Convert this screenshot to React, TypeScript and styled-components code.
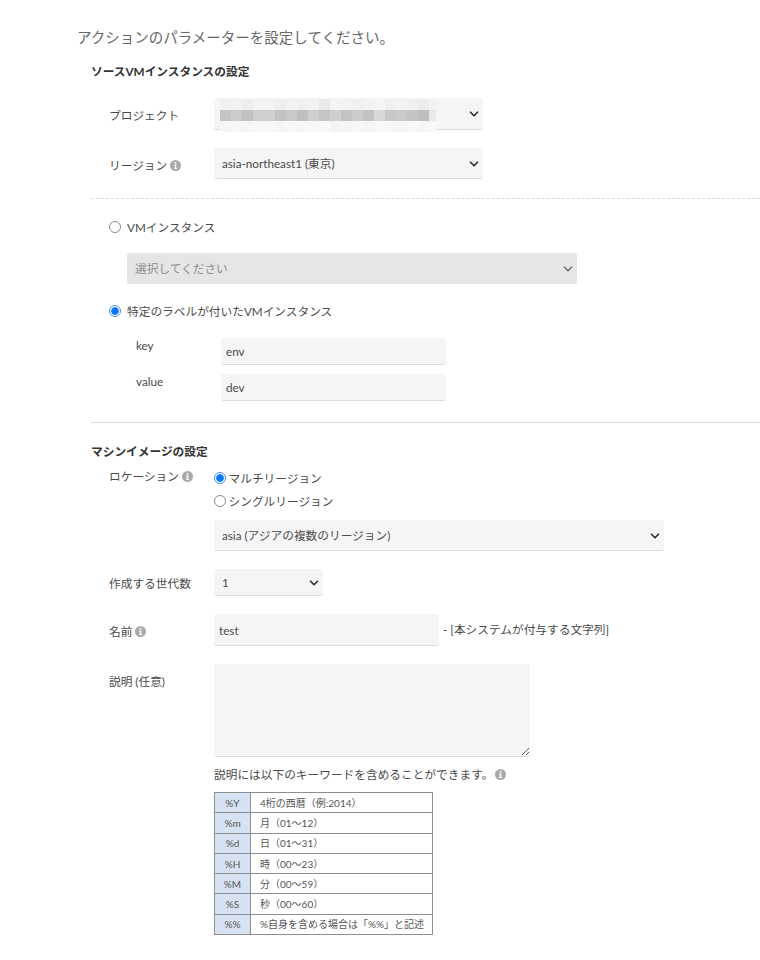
import { ReactNode } from 'react'
import styled, { createGlobalStyle } from 'styled-components'
import { ChevronDown } from 'lucide-react'

const GlobalStyle = createGlobalStyle`
  html, body {
    margin: 0;
    padding: 0;
    background: #fff;
  }
  body {
    font-family: Lato, "Noto Sans CJK JP", sans-serif;
    color: #4a4a4a;
    font-size: 12px;
  }
`

const Page = styled.div`
  width: 760px;
  height: 960px;
  overflow: hidden;
  box-sizing: border-box;
  padding: 29px 0 0 77px;
`

const Title = styled.div`
  font-size: 14.5px;
  line-height: 18px;
  color: #666;
`

const Body = styled.div`
  padding-left: 14px;
`

const Heading = styled.div<{ $top: number }>`
  margin-top: ${(p) => p.$top}px;
  font-size: 11.7px;
  line-height: 16px;
  font-weight: 700;
  color: #333;
`

const Row = styled.div<{ $top: number }>`
  display: flex;
  align-items: flex-start;
  margin-top: ${(p) => p.$top}px;
  padding-left: 18px;
`

const Label = styled.div<{ $pad: number }>`
  width: 105px;
  flex: none;
  display: flex;
  align-items: center;
  gap: 3px;
  padding-top: ${(p) => p.$pad}px;
  font-size: 11.7px;
  line-height: 16px;
  color: #4a4a4a;
`

const Info = styled.span`
  display: inline-flex;
  svg {
    display: block;
  }
`

const InfoIcon = () => (
  <Info>
    <svg width="11" height="11" viewBox="0 0 11 11">
      <circle cx="5.5" cy="5.5" r="5.5" fill="#a9a9a9" />
      <rect x="4.7" y="2" width="1.6" height="1.6" fill="#fff" />
      <path d="M4 4.6h2.3v3.3h.8v1H4v-1h.8V5.6H4z" fill="#fff" />
    </svg>
  </Info>
)

const SelectWrap = styled.div<{ $w: number; $h: number }>`
  position: relative;
  width: ${(p) => p.$w}px;
  height: ${(p) => p.$h}px;
  flex: none;
`

const SelectBox = styled.select<{ $off?: boolean }>`
  appearance: none;
  display: block;
  width: 100%;
  height: 100%;
  box-sizing: border-box;
  margin: 0;
  padding: 0 24px 0 8px;
  border: 0;
  border-bottom: 1px solid ${(p) => (p.$off ? '#e5e5e5' : '#dcdcdc')};
  border-radius: 3px;
  background: ${(p) => (p.$off ? '#e5e5e5' : '#f5f5f5')};
  color: ${(p) => (p.$off ? '#8f8f8f' : '#4a4a4a')};
  font: 11.7px Lato, "Noto Sans CJK JP", sans-serif;
  opacity: 1;
`

const Chevron = styled.span<{ $off?: boolean }>`
  position: absolute;
  top: 50%;
  right: 2px;
  transform: translateY(-50%);
  display: flex;
  color: ${(p) => (p.$off ? '#777' : '#333')};
  pointer-events: none;
`

const Select = ({ w, h, value, off }: { w: number; h: number; value: string; off?: boolean }) => (
  <SelectWrap $w={w} $h={h}>
    <SelectBox $off={off} disabled={off} defaultValue={value}>
      <option value={value}>{value}</option>
    </SelectBox>
    <Chevron $off={off}>
      <ChevronDown size={14} strokeWidth={3} />
    </Chevron>
  </SelectWrap>
)

const Mosaic = styled.svg`
  position: absolute;
  left: 6px;
  top: 1px;
  display: block;
`

const mosaicTop = [
  '#f0f0f0', '#f2f2f2', '#eeeeee', '#f3f3f3', '#f3f3f3', '#efefef', '#f2f2f2', '#f0f0f0', '#f2f2f2', '#e9e9e9',
  '#f4f4f4', '#f3f3f3', '#f0f0f0', '#f3f3f3', '#f5f5f5', '#f0f0f0', '#f2f2f2', '#f0f0f0', '#ededed', '#f2f2f2',
]
const mosaicMiddle = [
  '#c4c4c4', '#cccccc', '#c2c2c2', '#cfcfcf', '#cfcfcf', '#c3c3c3', '#c9c9c9', '#bfbfbf', '#cfcfcf', '#c5c5c5',
  '#cfcfcf', '#c3c3c3', '#cccccc', '#c2c2c2', '#d8d8d8', '#c8c8c8', '#cacaca', '#c4c4c4', '#bfbfbf', '#e9e9e9',
]
const mosaicBottom = [
  '#f5f5f5', '#f7f7f7', '#f6f6f6', '#f8f8f8', '#f8f8f8', '#f6f6f6', '#f8f8f8', '#f6f6f6', '#f8f8f8', '#f9f9f9',
  '#f4f4f4', '#f5f5f5', '#f7f7f7', '#f5f5f5', '#f8f8f8', '#f7f7f7', '#f6f6f6', '#f8f8f8', '#f6f6f6', '#f8f8f8',
]

// the project name is pixelated out in the source picture
const BlurredValue = () => (
  <Mosaic width="216" height="33" viewBox="0 0 216 33">
    {[mosaicTop, mosaicMiddle, mosaicBottom].map((cells, r) =>
      cells.map((c, i) => <rect key={`${r}-${i}`} x={i * 11} y={r * 11} width={i === 19 ? 7 : 11} height="11" fill={c} />),
    )}
  </Mosaic>
)

const Input = styled.input<{ $w: number; $h: number }>`
  display: block;
  flex: none;
  width: ${(p) => p.$w}px;
  height: ${(p) => p.$h}px;
  box-sizing: border-box;
  margin: 0;
  padding: 0 5px;
  border: 0;
  border-bottom: 1px solid #dcdcdc;
  border-radius: 3px;
  background: #f5f5f5;
  color: #4a4a4a;
  font: 11.7px Lato, "Noto Sans CJK JP", sans-serif;
  outline: none;
`

const TextArea = styled.textarea`
  display: block;
  width: 316px;
  height: 93px;
  box-sizing: border-box;
  margin: 0;
  border: 0;
  border-bottom: 1px solid #dcdcdc;
  border-radius: 3px;
  background: #f5f5f5;
  resize: vertical;
  outline: none;
`

const Dashed = styled.hr`
  margin: 19px 0 0;
  border: 0;
  border-top: 1px dashed #d8d8d8;
`

const Solid = styled.hr`
  margin: 21px 0 0;
  border: 0;
  border-top: 1px solid #d8d8d8;
`

const RadioRow = styled.label<{ $top: number; $left: number; $gap: number }>`
  display: flex;
  align-items: center;
  gap: ${(p) => p.$gap}px;
  margin-top: ${(p) => p.$top}px;
  padding-left: ${(p) => p.$left}px;
  font-size: 11.7px;
  line-height: 16px;
  color: #4a4a4a;
`

const RadioDot = styled.span<{ $on?: boolean }>`
  flex: none;
  width: 12px;
  height: 12px;
  border-radius: 50%;
  box-sizing: border-box;
  border: 1px solid ${(p) => (p.$on ? '#3d8ff5' : '#8a8a8a')};
  background: ${(p) => (p.$on ? 'radial-gradient(circle, #0a75f5 3.4px, #fff 4.2px)' : '#fff')};
`

type RadioProps = { on?: boolean; top: number; left: number; gap: number; children: ReactNode }

const Radio = ({ on, top, left, gap, children }: RadioProps) => (
  <RadioRow $top={top} $left={left} $gap={gap}>
    <RadioDot $on={on} />
    {children}
  </RadioRow>
)

const Indent = styled.div`
  margin-top: 18px;
  padding-left: 36px;
`

const PairRow = styled.div<{ $top: number }>`
  display: flex;
  align-items: flex-start;
  margin-top: ${(p) => p.$top}px;
  padding-left: 45px;
`

const PairLabel = styled.div`
  width: 85px;
  flex: none;
  margin-top: -1px;
  font-size: 11.7px;
  line-height: 16px;
  color: #4a4a4a;
`

const Column = styled.div`
  display: flex;
  flex-direction: column;
`

const SelectGap = styled.div`
  margin-top: 11px;
`

const Suffix = styled.div`
  padding: 7px 0 0 4px;
  font-size: 11.7px;
  line-height: 16px;
  color: #4a4a4a;
`

const Note = styled.div`
  display: flex;
  align-items: center;
  gap: 2px;
  margin-top: 9px;
  font-size: 11.7px;
  line-height: 16px;
  color: #4a4a4a;
`

const Keywords = styled.table`
  width: 219px;
  margin-top: 10px;
  border-collapse: collapse;
  table-layout: fixed;
  font-size: 10px;
  color: #555;

  td {
    height: 20.3px;
    box-sizing: border-box;
    padding: 0;
    border: 1px solid #8e8e8e;
    line-height: 12px;
  }
`

const KeyCell = styled.td`
  width: 36px;
  background: #d6e2f1;
  text-align: center;
`

const ValueCell = styled.td`
  padding-left: 9px !important;
  white-space: nowrap;
`

const keywords = [
  ['%Y', '4桁の西暦（例:2014）'],
  ['%m', '月（01〜12）'],
  ['%d', '日（01〜31）'],
  ['%H', '時（00〜23）'],
  ['%M', '分（00〜59）'],
  ['%S', '秒（00〜60）'],
  ['%%', '%自身を含める場合は「%%」と記述'],
]

export default function App() {
  return (
    <Page>
      <GlobalStyle />
      <Title>アクションのパラメーターを設定してください。</Title>
      <Body>
        <Heading $top={16}>ソースVMインスタンスの設定</Heading>
        <Row $top={19}>
          <Label $pad={9}>プロジェクト</Label>
          <SelectWrap $w={269} $h={32}>
            <Select w={269} h={32} value="" />
            <BlurredValue />
          </SelectWrap>
        </Row>
        <Row $top={18}>
          <Label $pad={9}>
            リージョン <InfoIcon />
          </Label>
          <Select w={269} h={31} value="asia-northeast1 (東京)" />
        </Row>
        <Dashed />
        <Radio top={20} left={18} gap={6}>VMインスタンス</Radio>
        <Indent>
          <Select w={450} h={31} value="選択してください" off />
        </Indent>
        <Radio top={19} left={18} gap={6} on>特定のラベルが付いたVMインスタンス</Radio>
        <PairRow $top={19}>
          <PairLabel>key</PairLabel>
          <Input $w={225} $h={27} defaultValue="env" />
        </PairRow>
        <PairRow $top={9}>
          <PairLabel>value</PairLabel>
          <Input $w={225} $h={27} defaultValue="dev" />
        </PairRow>
        <Solid />
        <Heading $top={20}>マシンイメージの設定</Heading>
        <Row $top={9}>
          <Label $pad={0}>
            ロケーション <InfoIcon />
          </Label>
          <Column>
            <Radio top={2} left={0} gap={2.5} on>マルチリージョン</Radio>
            <Radio top={7} left={0} gap={2.5}>シングルリージョン</Radio>
            <SelectGap>
              <Select w={450} h={31} value="asia (アジアの複数のリージョン)" />
            </SelectGap>
          </Column>
        </Row>
        <Row $top={18}>
          <Label $pad={6}>作成する世代数</Label>
          <Select w={109} h={27} value="1" />
        </Row>
        <Row $top={18}>
          <Label $pad={9}>
            名前 <InfoIcon />
          </Label>
          <Input $w={225} $h={32} defaultValue="test" />
          <Suffix>- [本システムが付与する文字列]</Suffix>
        </Row>
        <Row $top={18}>
          <Label $pad={9}>説明 (任意)</Label>
          <Column>
            <TextArea />
            <Note>
              説明には以下のキーワードを含めることができます。
              <InfoIcon />
            </Note>
            <Keywords>
              <tbody>
                {keywords.map(([k, v]) => (
                  <tr key={k}>
                    <KeyCell>{k}</KeyCell>
                    <ValueCell>{v}</ValueCell>
                  </tr>
                ))}
              </tbody>
            </Keywords>
          </Column>
        </Row>
      </Body>
    </Page>
  )
}
